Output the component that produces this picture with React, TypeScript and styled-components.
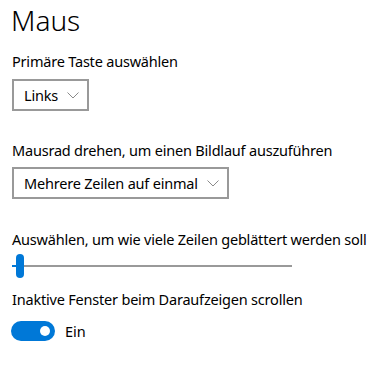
import styled, { createGlobalStyle } from "styled-components";

const Global = createGlobalStyle`
    body {
        margin: 0;
        background: #ffffff;
        font-family: 'Noto Sans', 'Open Sans', sans-serif;
        color: #000000;
    }
`

const Page = styled.div`
    width: 380px;
    height: 373px;
    padding: 0 12px;
    box-sizing: border-box;
    display: flex;
    flex-direction: column;
`

const Title = styled.h1`
    margin: 0;
    font-weight: 300;
    font-size: 28px;
    line-height: 40px;
    height: 44px;
    margin-left: -1px;
`

const Label = styled.div<{ $top: number }>`
    margin-top: ${p => p.$top}px;
    font-size: 14.5px;
    line-height: 20px;
    letter-spacing: -0.2px;
`

const Select = styled.div<{ $top?: number }>`
    margin-top: ${p => p.$top ?? 8}px;
    align-self: flex-start;
    height: 32px;
    box-sizing: border-box;
    border: 2px solid #999999;
    display: flex;
    align-items: center;
    gap: 9px;
    padding: 0 8px 0 10px;
    font-size: 14.5px;
    letter-spacing: -0.2px;
`

const Chevron = () => (
    <svg width="12" height="7" viewBox="0 0 12 7">
        <path d="M0.5 0.5 L6 6 L11.5 0.5" fill="none" stroke="#8a8a8a" strokeWidth="1" />
    </svg>
)

const Slider = styled.div`
    margin-top: 5px;
    width: 280px;
    height: 24px;
    display: flex;
    align-items: center;
`

const Filled = styled.div`
    width: 4px;
    height: 2px;
    background: #0078d7;
`

const Thumb = styled.div`
    width: 8px;
    height: 24px;
    border-radius: 4px;
    background: #0078d7;
`

const Track = styled.div`
    flex: 1;
    height: 2px;
    background: #999999;
`

const ToggleRow = styled.div`
    margin-top: 12px;
    display: flex;
    align-items: center;
    gap: 10px;
    font-size: 14.5px;
`

const Toggle = styled.div<{ $on: boolean }>`
    width: 44px;
    height: 20px;
    border-radius: 10px;
    background: ${p => (p.$on ? "#0078d7" : "#ffffff")};
    display: flex;
    align-items: center;
    justify-content: ${p => (p.$on ? "flex-end" : "flex-start")};
    padding: 0 5px;
    box-sizing: border-box;
    margin-left: -1px;

    &::after {
        content: "";
        width: 10px;
        height: 10px;
        border-radius: 50%;
        background: #ffffff;
    }
`

const App = () => {
    return (
        <Page>
            <Global />
            <Title>Maus</Title>
            <Label $top={7}>Primäre Taste auswählen</Label>
            <Select>
                Links
                <Chevron />
            </Select>
            <Label $top={29}>Mausrad drehen, um einen Bildlauf auszuführen</Label>
            <Select $top={7}>
                Mehrere Zeilen auf einmal
                <Chevron />
            </Select>
            <Label $top={30}>Auswählen, um wie viele Zeilen geblättert werden soll</Label>
            <Slider>
                <Filled />
                <Thumb />
                <Track />
            </Slider>
            <Label $top={11}>Inaktive Fenster beim Daraufzeigen scrollen</Label>
            <ToggleRow>
                <Toggle $on />
                Ein
            </ToggleRow>
        </Page>
    )
}

export default App;
